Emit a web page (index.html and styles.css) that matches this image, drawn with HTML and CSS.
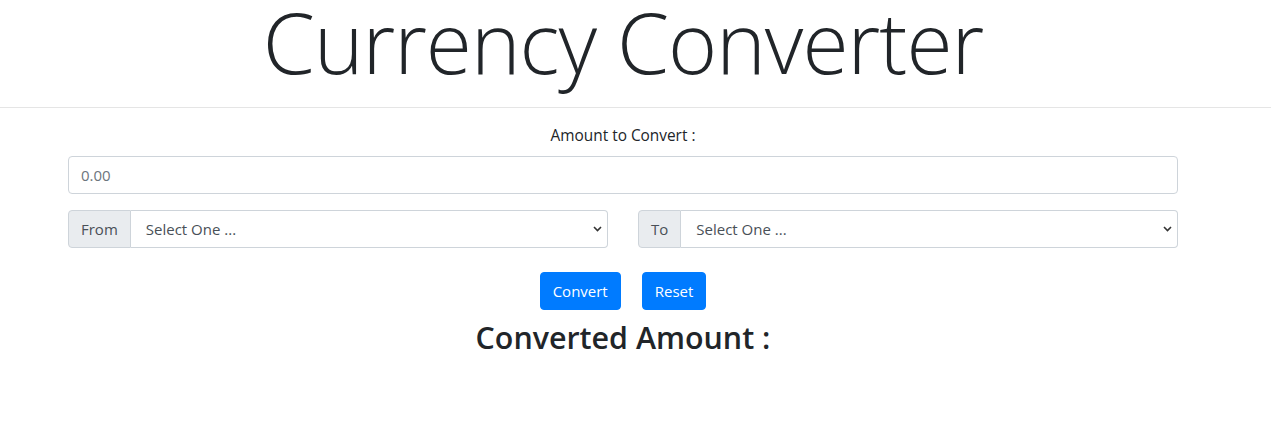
FILE: index.html
```html
<!DOCTYPE html>
<html lang="en">
<head>
<meta charset="utf-8">
<title>Currency Converter</title>
<link rel="stylesheet" href="styles.css">
</head>
<body>
<header class="header">
  <h1 class="title">Currency Converter</h1>
</header>
<hr class="divider">
<main class="page">
  <div class="container">
    <label class="label" for="amount">Amount to Convert :</label>
    <input class="input" id="amount" type="text" placeholder="0.00">
    <div class="row">
      <div class="group">
        <span class="addon">From</span>
        <div class="select-wrap">
          <select class="select"><option>Select One ...</option></select>
          <svg class="chev" width="9" height="6" viewBox="0 0 9 6"><path d="M1 1l3.5 3.5L8 1" fill="none" stroke="#333" stroke-width="1.6"/></svg>
        </div>
      </div>
      <div class="group">
        <span class="addon">To</span>
        <div class="select-wrap">
          <select class="select"><option>Select One ...</option></select>
          <svg class="chev" width="9" height="6" viewBox="0 0 9 6"><path d="M1 1l3.5 3.5L8 1" fill="none" stroke="#333" stroke-width="1.6"/></svg>
        </div>
      </div>
    </div>
    <div class="actions">
      <button class="btn" type="button">Convert</button>
      <button class="btn" type="button">Reset</button>
    </div>
    <h3 class="result">Converted Amount :</h3>
  </div>
</main>
</body>
</html>
```

FILE: styles.css
```css
* { box-sizing: border-box; }
html, body { margin: 0; padding: 0; background: #fff; }
body {
  font-family: "Open Sans", "Noto Sans", "Liberation Sans", sans-serif;
  color: #212529;
  font-size: 16px;
  line-height: 1.5;
}
.header {
  padding-right: 25px;
  text-align: center;
}
.title {
  margin: 0;
  font-size: 84px;
  font-weight: 300;
  line-height: 84px;
  padding-bottom: 23px;
  letter-spacing: -1px;
}
.divider {
  margin: 0;
  border: 0;
  border-top: 1px solid #e5e5e5;
}
.page { padding-right: 25px; }
.container {
  width: 1110px;
  margin: 0 auto;
  padding-top: 16px;
  display: flex;
  flex-direction: column;
}
.label {
  display: block;
  text-align: center;
  font-size: 15.4px;
  line-height: 24px;
  margin-bottom: 8px;
}
.input {
  display: block;
  width: 100%;
  height: 38px;
  padding: 6px 12px;
  font-family: inherit;
  font-size: 15px;
  color: #495057;
  border: 1px solid #ced4da;
  border-radius: 4px;
  background: #fff;
}
.input::placeholder { color: #6c757d; }
.row {
  display: grid;
  grid-template-columns: 1fr 1fr;
  column-gap: 30px;
  margin-top: 16px;
}
.group {
  display: flex;
  height: 38px;
}
.addon {
  display: flex;
  align-items: center;
  padding: 0 12px;
  font-size: 15px;
  color: #495057;
  background: #e9ecef;
  border: 1px solid #ced4da;
  border-radius: 4px 0 0 4px;
}
.select-wrap {
  position: relative;
  flex: 1;
}
.select {
  appearance: none;
  -webkit-appearance: none;
  width: 100%;
  height: 38px;
  padding: 6px 30px 6px 15px;
  font-family: inherit;
  font-size: 15px;
  color: #495057;
  background: #fff;
  border: 1px solid #ced4da;
  border-left: 0;
  border-radius: 0 4px 4px 0;
}
.chev {
  position: absolute;
  right: 6px;
  top: 16px;
  pointer-events: none;
}
.actions {
  display: flex;
  justify-content: center;
  gap: 21px;
  margin-top: 24px;
}
.btn {
  height: 38px;
  padding: 6px 12px;
  font-family: inherit;
  font-size: 15px;
  color: #fff;
  background: #007bff;
  border: 1px solid #007bff;
  border-radius: 4px;
}
.result {
  margin: 10px 0 0;
  text-align: center;
  font-size: 30.4px;
  font-weight: 600;
  line-height: 36px;
}
```
